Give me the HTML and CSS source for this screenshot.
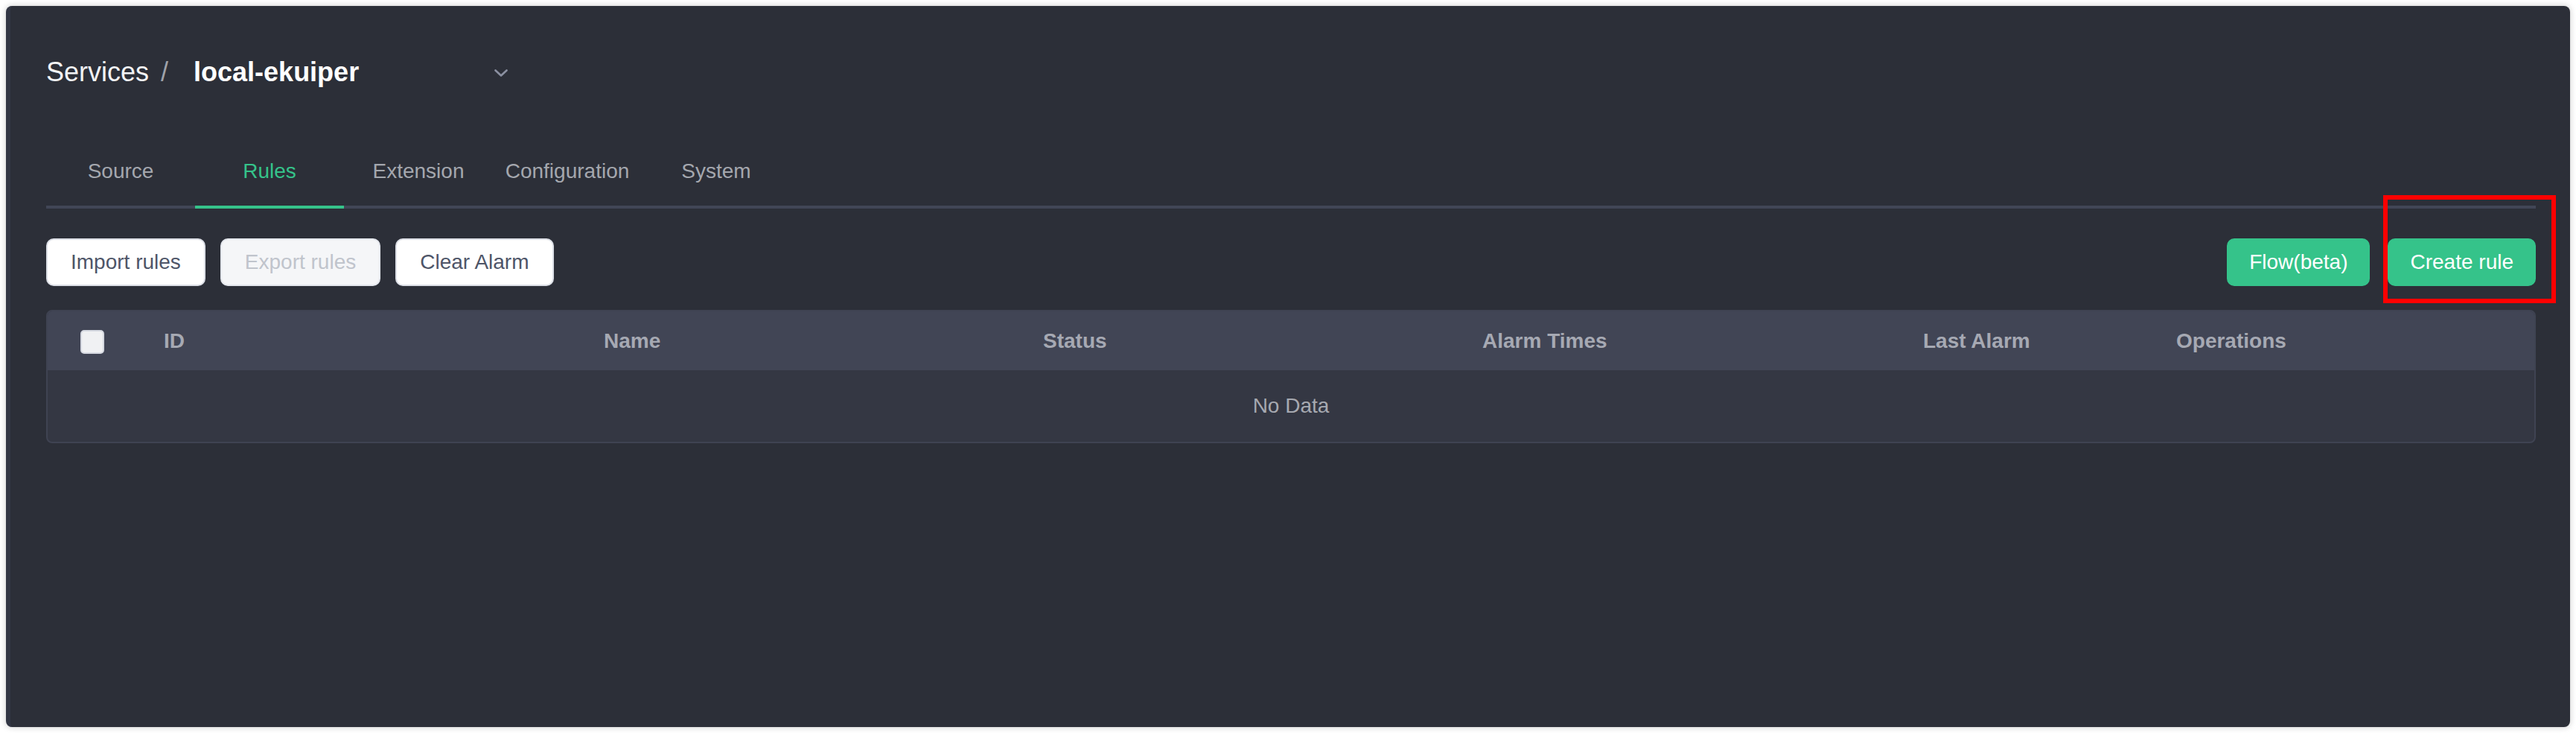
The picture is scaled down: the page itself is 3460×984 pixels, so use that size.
FILE: index.html
```html
<!DOCTYPE html>
<html lang="en">
<head>
<meta charset="utf-8">
<title>Rules - local-ekuiper</title>
<link rel="stylesheet" href="styles.css">
</head>
<body>
<div class="panel">
  <div class="breadcrumb">
    <span class="crumb">Services</span>
    <span class="sep">/</span>
    <div class="select">
      <span class="select-value">local-ekuiper</span>
      <svg class="chevron" width="18" height="10" viewBox="0 0 18 10"><polyline points="1.5,1.5 9,8.5 16.5,1.5" fill="none" stroke="#8b90a1" stroke-width="2.6" stroke-linecap="round" stroke-linejoin="round"/></svg>
    </div>
  </div>

  <div class="tabs">
    <div class="tab">Source</div>
    <div class="tab active">Rules</div>
    <div class="tab">Extension</div>
    <div class="tab">Configuration</div>
    <div class="tab">System</div>
  </div>

  <div class="toolbar">
    <div class="btn-group">
      <button class="btn">Import rules</button>
      <button class="btn disabled">Export rules</button>
      <button class="btn">Clear Alarm</button>
    </div>
    <div class="btn-group">
      <button class="btn primary">Flow(beta)</button>
      <span class="highlight-wrap">
        <button class="btn primary">Create rule</button>
        <span class="highlight"></span>
      </span>
    </div>
  </div>

  <div class="table">
    <div class="thead">
      <div class="cell check-cell"><span class="checkbox"></span></div>
      <div class="cell">ID</div>
      <div class="cell">Name</div>
      <div class="cell">Status</div>
      <div class="cell">Alarm Times</div>
      <div class="cell">Last Alarm</div>
      <div class="cell">Operations</div>
    </div>
    <div class="empty">No Data</div>
  </div>
</div>
</body>
</html>
```

FILE: styles.css
```css
html, body {
  margin: 0;
  padding: 0;
  background: #ffffff;
}

body {
  font-family: "Liberation Sans", Arial, Helvetica, sans-serif;
  padding: 8px;
  width: 3460px;
  height: 984px;
  box-sizing: border-box;
}

.panel {
  box-sizing: border-box;
  height: 968px;
  background: #2c2f38;
  border-radius: 8px;
  border-left: 6px solid #323644;
  box-shadow: 0 0 8px rgba(0, 0, 0, 0.22);
  padding: 64px 46px 0 48px;
}

/* breadcrumb */
.breadcrumb {
  display: flex;
  align-items: center;
  height: 50px;
  font-size: 36px;
}

.crumb {
  color: #f2f3f5;
}

.sep {
  color: #9fa2aa;
  margin: 0 34px 0 16px;
}

.select {
  display: flex;
  align-items: center;
  justify-content: space-between;
  width: 422px;
}

.select-value {
  color: #ffffff;
  font-weight: bold;
}

.chevron {
  display: block;
  margin-top: 2px;
}

/* tabs */
.tabs {
  display: flex;
  margin-top: 78px;
  border-bottom: 4px solid #414656;
}

.tab {
  width: 200px;
  height: 76px;
  line-height: 60px;
  text-align: center;
  font-size: 28px;
  color: #a4a7ae;
  box-sizing: border-box;
}

.tab.active {
  color: #35c38a;
  height: 80px;
  margin-bottom: -4px;
  border-bottom: 4px solid #35c38a;
}

/* toolbar */
.toolbar {
  display: flex;
  justify-content: space-between;
  margin-top: 40px;
}

.btn-group {
  display: flex;
  gap: 20px;
}

.btn-group + .btn-group {
  gap: 24px;
}

.btn {
  height: 64px;
  padding: 0 31px;
  font-family: inherit;
  font-size: 28px;
  color: #4e5568;
  background: #ffffff;
  border: 2px solid #dcdfe6;
  border-radius: 10px;
  box-sizing: border-box;
  display: block;
}

.btn.disabled {
  color: #c0c4cc;
  background: #f5f6f8;
  border-color: #e4e7ed;
}

.btn.primary {
  padding: 0 28px;
  color: #ffffff;
  background: #35c38a;
  border-color: #35c38a;
}

.highlight-wrap {
  position: relative;
  display: block;
}

.highlight {
  position: absolute;
  left: -6px;
  top: -58px;
  right: -27px;
  bottom: -23px;
  border: 6px solid #ff0000;
  pointer-events: none;
}

/* table */
.table {
  margin-top: 32px;
  border: 2px solid #3f4352;
  border-radius: 8px;
  overflow: hidden;
  background: #343743;
}

.thead {
  display: grid;
  grid-template-columns: 132px 591px 590px 590px 592px 340px 1fr;
  height: 79px;
  background: #414555;
  align-items: center;
}

.cell {
  padding-left: 24px;
  font-size: 28px;
  font-weight: bold;
  color: #a6a9b3;
}

.check-cell {
  padding-left: 44px;
  display: flex;
  align-items: center;
  padding-top: 2px;
}

.checkbox {
  display: block;
  width: 32px;
  height: 32px;
  box-sizing: border-box;
  background: #f0f1f3;
  border: 2px solid #d6d9e1;
  border-radius: 5px;
}

.empty {
  height: 96px;
  line-height: 96px;
  text-align: center;
  font-size: 28px;
  color: #a6a9b1;
}
```
